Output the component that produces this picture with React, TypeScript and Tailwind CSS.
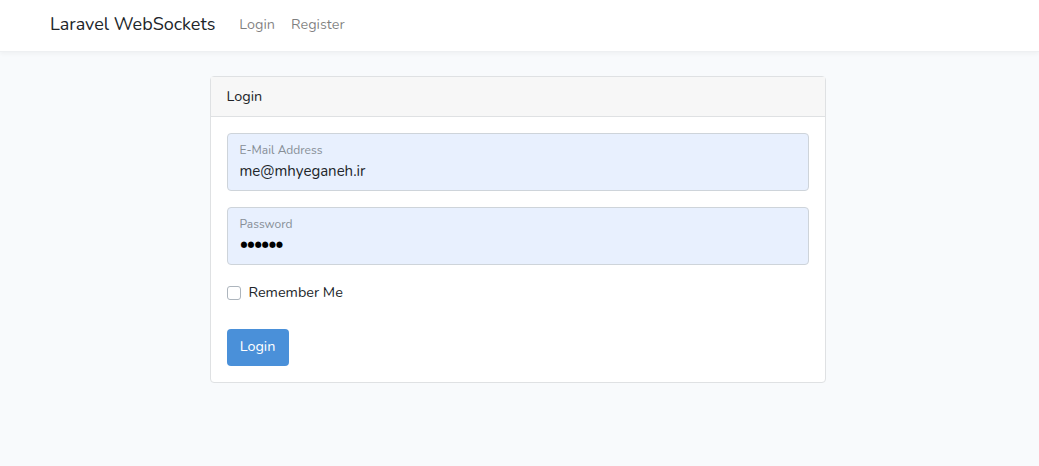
import React from "react";

const font = { fontFamily: '"Nunito", "Lato", "Noto Sans", sans-serif' };

function Field({ label, value, type }: { label: string; value: string; type: string }) {
  return (
    <div className="h-[58px] rounded-[4px] border border-[#ced4da] bg-[#e8f0fe] px-3 pt-[8px]">
      <div className="text-[12px] leading-[16px] text-[#868e96]">{label}</div>
      {type === "password" ? (
        <div className="mt-[3px] text-[17px] leading-[20px] tracking-[-1.8px] text-black">••••••</div>
      ) : (
        <div className="mt-[3px] text-[15px] leading-[20px] text-[#212529]">{value}</div>
      )}
    </div>
  );
}

export default function App() {
  return (
    <div className="min-h-[466px] bg-[#f8fafc] text-[#212529]" style={font}>
      <nav className="h-[52px] bg-white shadow-[0_2px_4px_rgba(0,0,0,0.04)] border-b border-[#eef0f2]">
        <div className="flex h-full items-center pb-[2px] pl-[50px]">
          <span className="text-[18px] text-[#212529]">Laravel WebSockets</span>
          <div className="ml-[24px] flex gap-[16px] text-[14.4px] text-[rgba(0,0,0,0.5)]">
            <span>Login</span>
            <span>Register</span>
          </div>
        </div>
      </nav>

      <div className="flex justify-center pt-[24px] pr-[4px]">
        <div className="w-[616px] rounded-[4px] border border-[#dfe1e3] bg-white">
          <div className="flex h-[40px] items-center border-b border-[#dfe1e3] bg-[#f7f7f7] px-4 text-[14.4px]">
            Login
          </div>
          <div className="px-4 pt-4 pb-4">
            <Field label="E-Mail Address" value="me@mhyeganeh.ir" type="email" />
            <div className="mt-[16px]">
              <Field label="Password" value="secret" type="password" />
            </div>
            <div className="mt-[17px] flex items-center gap-[8px]">
              <span className="h-[14px] w-[14px] rounded-[3px] border border-[#adb5bd] bg-white" />
              <span className="text-[14.4px]">Remember Me</span>
            </div>
            <button className="mt-[25px] h-[37px] w-[62px] rounded-[4px] bg-[#4a90d9] text-[14.4px] text-white">
              Login
            </button>
          </div>
        </div>
      </div>
    </div>
  );
}
